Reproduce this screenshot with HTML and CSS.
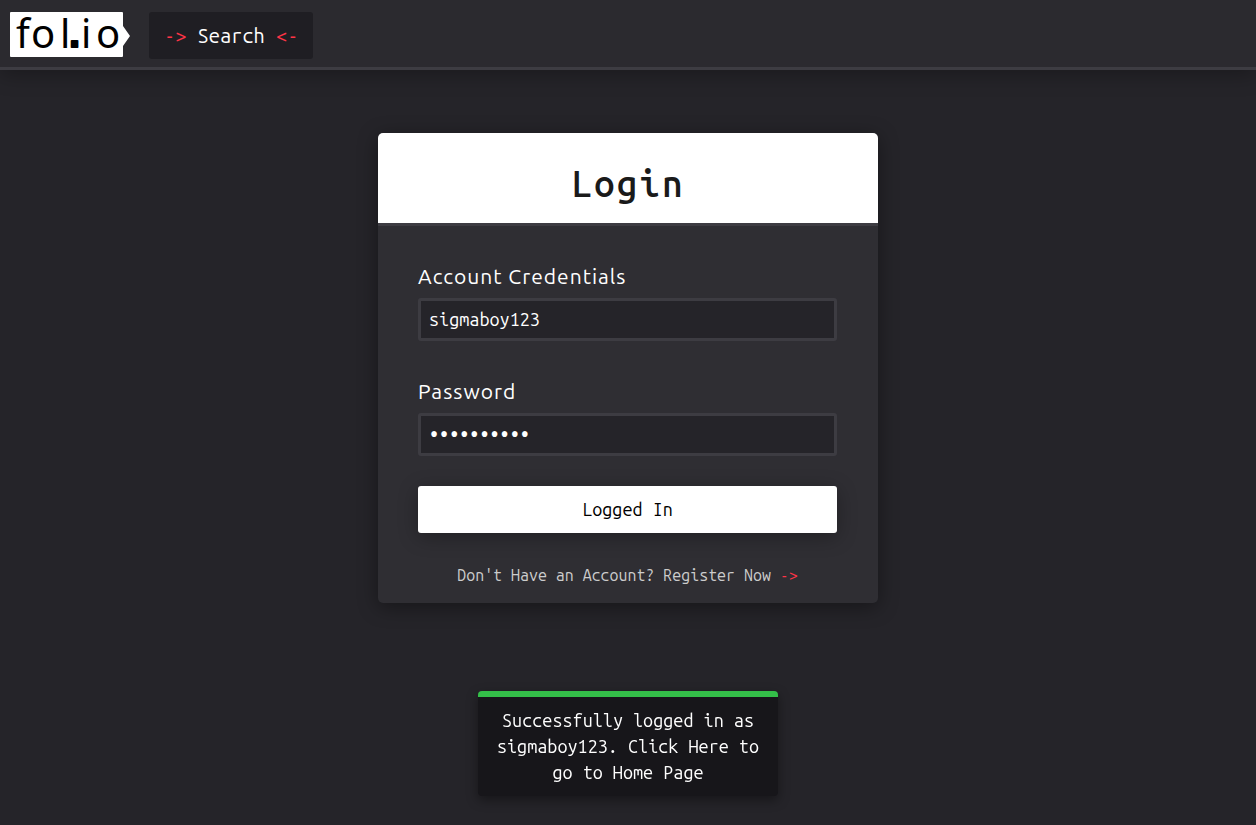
FILE: index.html
```html
<!DOCTYPE html>
<html lang="en">
<head>
<meta charset="utf-8">
<meta name="viewport" content="width=device-width, initial-scale=1">
<title>Login - fol.io</title>
<link rel="stylesheet" href="styles.css">
</head>
<body>
<header class="topbar">
  <a class="logo" href="#" aria-label="fol.io home">
    <svg width="120" height="45" viewBox="0 0 120 45">
      <path class="logo-tag" d="M1 0H112Q113 0 113 1V14L120 24L113 34V44Q113 45 112 45H1Q0 45 0 44V1Q0 0 1 0Z"/>
      <text class="logo-text" y="36 36 36 35 36 36" x="6 21 50 59 71 86">fol<tspan class="logo-dot">.</tspan>io</text>
    </svg>
  </a>
  <button class="search" type="button"><span class="accent">-&gt;</span> Search <span class="accent">&lt;-</span></button>
</header>
<main class="page">
  <section class="card">
    <h1 class="card-title">Login</h1>
    <form class="form">
      <div class="field">
        <label class="label" for="account">Account Credentials</label>
        <input class="input" id="account" type="text" value="sigmaboy123">
      </div>
      <div class="field">
        <label class="label" for="password">Password</label>
        <input class="input" id="password" type="password" value="sigma12345">
      </div>
      <button class="submit" type="button">Logged In</button>
      <a class="register" href="#">Don't Have an Account? Register Now <span class="accent">-&gt;</span></a>
    </form>
  </section>
</main>
<a class="toast" href="#" role="status">Successfully logged in as sigmaboy123. Click Here to go to Home Page</a>
</body>
</html>
```
FILE: styles.css
```css
* {
  box-sizing: border-box;
}

body {
  margin: 0;
  min-height: 100vh;
  background: #252429;
  color: #fff;
  font-family: "Ubuntu Mono", "DejaVu Sans Mono", monospace;
  font-size: 18px;
}

a {
  color: inherit;
  text-decoration: none;
}

button,
input {
  font: inherit;
}

.accent {
  color: #ff3446;
}

.topbar {
  display: flex;
  align-items: flex-start;
  gap: 19px;
  height: 70px;
  padding: 12px 10px 0;
  background: #2b2a2f;
  border-bottom: 3px solid #3d3c42;
  box-shadow: 0 4px 20px rgba(0, 0, 0, 0.3);
}

.logo svg {
  display: block;
  overflow: visible;
}

.logo-tag {
  fill: #fff;
}

.logo-text {
  font-family: "Noto Sans", sans-serif;
  font-size: 40px;
  fill: #000;
}

.logo-dot {
  font-family: "Liberation Sans", sans-serif;
  font-weight: 700;
  stroke: #000;
  stroke-width: 2px;
  stroke-linejoin: round;
}

.search {
  height: 47px;
  padding: 0 15px;
  border: 0;
  border-radius: 3px;
  background: #1f1e23;
  color: #fff;
  font-size: 20px;
}

.page {
  display: flex;
  justify-content: center;
  padding: 63px 20px 0;
}

.card {
  width: 100%;
  max-width: 500px;
  border-radius: 5px;
  background: #2f2e33;
  box-shadow: 0 4px 20px rgba(0, 0, 0, 0.4);
}

.card-title {
  margin: 0;
  padding: 23px 0 12px;
  border-bottom: 3px solid #3d3c42;
  border-radius: 5px 5px 0 0;
  background: #fff;
  color: #1a1a1a;
  font-size: 37px;
  font-weight: 500;
  line-height: 55px;
  letter-spacing: 2px;
  text-align: center;
}

.form {
  display: flex;
  flex-direction: column;
  padding: 36px 41px 16px 40px;
}

.field {
  display: flex;
  flex-direction: column;
  gap: 8px;
  margin-bottom: 36px;
}

.field + .field {
  margin-bottom: 30px;
}

.label {
  font-family: Ubuntu, "Noto Sans", sans-serif;
  font-size: 21px;
  line-height: 28px;
  letter-spacing: 1px;
}

.input {
  width: 100%;
  height: 43px;
  padding: 0 8px 2px;
  border: 3px solid #3d3c42;
  border-radius: 3px;
  outline: 0;
  background: #252429;
  color: #fff;
}

.submit {
  height: 47px;
  padding: 0 6px 2px;
  border: 0;
  border-radius: 3px;
  background: #fff;
  color: #000;
  box-shadow: 0 4px 20px rgba(0, 0, 0, 0.3);
}

.register {
  margin-top: 30px;
  color: #ccc;
  font-size: 16px;
  line-height: 24px;
  text-align: center;
}

.toast {
  position: fixed;
  left: 50%;
  bottom: 29px;
  width: 300px;
  padding: 10px 15px 11px;
  transform: translateX(-50%);
  border-top: 6px solid #34bf49;
  border-radius: 4px;
  background: #17161a;
  box-shadow: 0 4px 12px rgba(0, 0, 0, 0.4);
  line-height: 26px;
  text-align: center;
}
```
